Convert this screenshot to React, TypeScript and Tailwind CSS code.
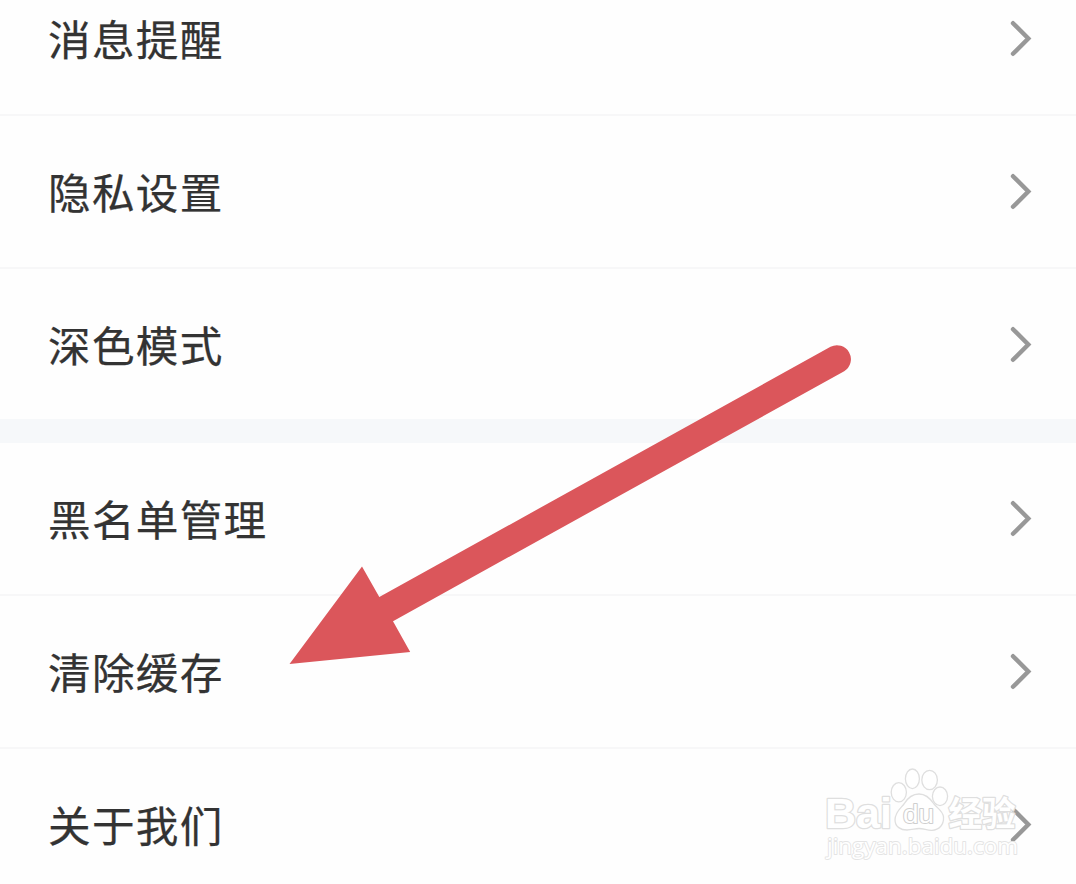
import React from 'react'

const GROUPS = [
  ['消息提醒', '隐私设置', '深色模式'],
  ['黑名单管理', '清除缓存', '关于我们'],
]

function Chevron() {
  return (
    <svg className="w-6 h-10 shrink-0" viewBox="0 0 24 40" fill="none">
      <path d="M5 4.2 L20.3 19.5 L5 34.8" stroke="#989898" strokeWidth="4.4" strokeLinecap="round" strokeLinejoin="miter" />
    </svg>
  )
}

function SettingsRow({ label, last }: { label: string; last: boolean }) {
  return (
    <button className={`flex w-full shrink-0 items-center justify-between pl-12 pr-11 ${last ? 'h-[151px]' : 'h-[153px] border-b-2 border-[#f7f7f8]'}`}>
      <span className="pb-px text-[42.6px] leading-[60px] tracking-[1.3px] text-[#333333] [-webkit-text-stroke:0.25px_#333333]">{label}</span>
      <Chevron />
    </button>
  )
}

function Arrow() {
  return (
    <svg className="absolute left-0 top-0 pointer-events-none" width="1076" height="884" viewBox="0 0 1076 884">
      <path
        d="M289.5 664 L362 566.5 L379.3 597 L830.5 346.8 A14 14 0 0 1 844.2 371.2 L393 621.2 L410.2 652 Z"
        fill="#db565b"
      />
    </svg>
  )
}

function Watermark() {
  return (
    <svg
      className="absolute left-[816px] top-[760px] pointer-events-none"
      width="220"
      height="110"
      viewBox="816 760 220 110"
      fill="#ffffff"
      stroke="#dfdfdf"
      strokeWidth="1.3"
      strokeLinejoin="round"
    >
      <text
        className="font-['Liberation_Sans'] font-bold [paint-order:stroke]"
        x="825" y="828" fontSize="43" strokeWidth="2.6" textLength="67" lengthAdjust="spacingAndGlyphs"
      >
        Bai
      </text>

      {/* Paw */}
      <ellipse cx="898.8" cy="792.3" rx="7.6" ry="9.6" />
      <ellipse cx="912.4" cy="778.8" rx="7" ry="9.8" />
      <ellipse cx="929.6" cy="780" rx="7.8" ry="9.6" />
      <ellipse cx="940" cy="796.3" rx="7.6" ry="9.3" />
      <path d="M919 794 C911 794 907 799 904 804 C901 808 895 812 895 820 C895 827 901 830 907 830 C912 830 915 828.5 919 828.5 C924 828.5 927 830.5 932 830.3 C939 830 944 825 943.5 817 C943 811 937 808 934 804 C930 798 926 794 919 794 Z" />
      <text
        className="font-['Liberation_Sans'] [paint-order:stroke]"
        x="903" y="823" fontSize="26" stroke="#cfcfcf" strokeWidth="2" textLength="31" lengthAdjust="spacingAndGlyphs"
      >
        du
      </text>

      <text
        className="font-['Noto_Sans_CJK_SC'] font-bold [paint-order:stroke]"
        x="948.5" y="826" fontSize="34" strokeWidth="2.6" textLength="67" lengthAdjust="spacingAndGlyphs"
      >
        经验
      </text>
      <text
        className="font-['Open_Sans'] [paint-order:stroke]"
        x="827" y="854" fontSize="22" stroke="#e4e4e4" strokeWidth="1.8" textLength="191" lengthAdjust="spacingAndGlyphs"
      >
        jingyan.baidu.com
      </text>
    </svg>
  )
}

export default function App() {
  return (
    <div className="relative h-[884px] w-[1076px] overflow-hidden bg-[#fefefe] font-['Noto_Sans_CJK_SC',sans-serif]">
      <div className="-mt-[37px] flex flex-col">
        {GROUPS.map((labels, g) => (
          <React.Fragment key={g}>
            {g > 0 && <div className="-mt-px h-6 shrink-0 bg-[#f6f8fa]" />}
            {labels.map((label, i) => (
              <SettingsRow key={label} label={label} last={i === labels.length - 1} />
            ))}
          </React.Fragment>
        ))}
      </div>
      <Arrow />
      <Watermark />
    </div>
  )
}
